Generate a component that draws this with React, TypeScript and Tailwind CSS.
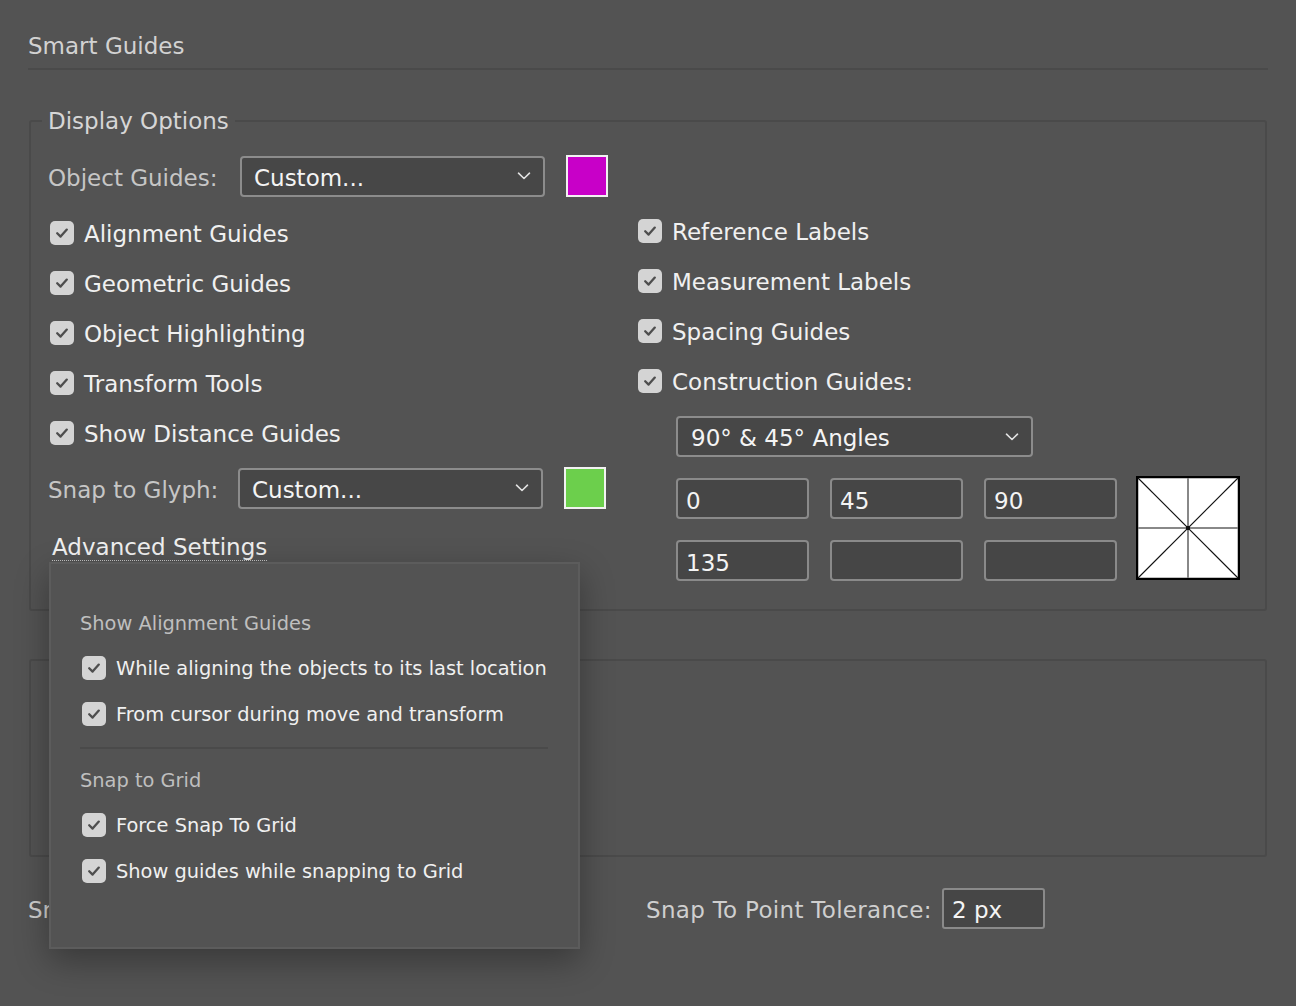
import React from "react";

const Check = () => (
  <span className="w-[24px] h-[24px] rounded-[5px] bg-[#d4d4d4] flex items-center justify-center shrink-0">
    <svg width="14" height="12" viewBox="0 0 14 12">
      <path d="M2.2 6.2 L5.6 9.6 L11.8 2.6" stroke="#4e4e4e" strokeWidth="2.3" fill="none" strokeLinecap="round" strokeLinejoin="round" />
    </svg>
  </span>
);

const Chevron = () => (
  <svg width="14" height="8" viewBox="0 0 14 8" className="shrink-0">
    <path d="M1.5 1.2 L7 6.5 L12.5 1.2" stroke="#e2e2e2" strokeWidth="1.6" fill="none" strokeLinecap="round" strokeLinejoin="round" />
  </svg>
);

const CheckRow = ({ label }: { label: string }) => (
  <div className="h-[50px] flex items-center">
    <span className="ml-[2px]">
      <Check />
    </span>
    <span className="ml-[10px] pt-[1px] text-[23px] leading-[28px] text-[#f0f0f0]">{label}</span>
  </div>
);

const CheckRowR = ({ label }: { label: string }) => (
  <div className="h-[50px] flex items-center">
    <Check />
    <span className="ml-[10px] pt-[1px] text-[23px] leading-[28px] text-[#f0f0f0]">{label}</span>
  </div>
);

const PopRow = ({ label }: { label: string }) => (
  <div className="h-[46px] flex items-center">
    <span className="ml-[2px]">
      <Check />
    </span>
    <span className="ml-[10px] pt-[1px] text-[19.4px] leading-[26px] text-[#f0f0f0]">{label}</span>
  </div>
);

const Field = ({ value }: { value: string }) => (
  <div className="w-[133px] h-[41px] rounded-[4px] border-2 border-[#8a8a8a] bg-[#464646] flex items-center pl-[8px] pt-[4px] text-[23px] leading-[28px] text-[#f4f4f4]">
    {value}
  </div>
);

export default function App() {
  return (
    <div className="relative w-[1296px] h-[1006px] overflow-hidden bg-[#535353] font-['DejaVu_Sans',sans-serif]">
      <div className="px-[28px]">
        <div className="h-[70px] border-b-2 border-[#4a4a4a] pt-[32px]">
          <div className="text-[23px] leading-[28px] text-[#d2d2d2]">Smart Guides</div>
        </div>

        <fieldset className="mt-[36px] mx-[1px] border-2 border-[#4a4a4a] rounded-[3px] pb-[28px]">
          <legend className="ml-[11px] px-[6px] pt-[1px] text-[23px] leading-[28px] text-[#d6d6d6]">Display Options</legend>
          <div className="flex">
            <div className="w-[607px] pl-[17px] flex flex-col">
              <div className="mt-[20px] h-[42px] flex items-center">
                <span className="w-[192px] pt-[3px] text-[23px] leading-[28px] text-[#c6c6c6]">Object Guides:</span>
                <div className="w-[305px] h-[41px] rounded-[4px] border-2 border-[#8c8c8c] bg-[#474747] flex items-center justify-between pl-[12px] pr-[12px]">
                  <span className="pt-[3px] text-[23px] leading-[28px] text-[#f4f4f4]">Custom...</span>
                  <Chevron />
                </div>
                <div className="ml-[21px] w-[42px] h-[42px] border-2 border-[#f2f2f2] bg-[#c800c8]" />
              </div>
              <div className="mt-[11px] flex flex-col">
                <CheckRow label="Alignment Guides" />
                <CheckRow label="Geometric Guides" />
                <CheckRow label="Object Highlighting" />
                <CheckRow label="Transform Tools" />
                <CheckRow label="Show Distance Guides" />
              </div>
              <div className="mt-[9px] h-[42px] flex items-center">
                <span className="w-[190px] pt-[3px] text-[23px] leading-[28px] text-[#c6c6c6]">Snap to Glyph:</span>
                <div className="w-[305px] h-[41px] rounded-[4px] border-2 border-[#8c8c8c] bg-[#474747] flex items-center justify-between pl-[12px] pr-[12px]">
                  <span className="pt-[3px] text-[23px] leading-[28px] text-[#f4f4f4]">Custom...</span>
                  <Chevron />
                </div>
                <div className="ml-[21px] w-[42px] h-[42px] border-2 border-[#f2f2f2] bg-[#6ccf4c]" />
              </div>
              <div className="mt-[23px] ml-[4px] self-start pt-[2px] text-[23px] leading-[26px] text-[#f0f0f0] border-b-[1.5px] border-dotted border-[#c4c4c4]">
                Advanced Settings
              </div>
            </div>

            <div className="flex flex-col">
              <div className="mt-[71px] flex flex-col">
                <CheckRowR label="Reference Labels" />
                <CheckRowR label="Measurement Labels" />
                <CheckRowR label="Spacing Guides" />
                <CheckRowR label="Construction Guides:" />
              </div>
              <div className="mt-[10px] ml-[38px] w-[357px] h-[41px] rounded-[4px] border-2 border-[#8c8c8c] bg-[#474747] flex items-center justify-between pl-[13px] pr-[12px]">
                <span className="pt-[3px] text-[23px] leading-[28px] text-[#f4f4f4]">90° &amp; 45° Angles</span>
                <Chevron />
              </div>
              <div className="mt-[19px] ml-[38px] flex items-start">
                <div className="mt-[2px] grid grid-cols-[133px_133px_133px] gap-x-[21px] gap-y-[21px]">
                  <Field value="0" />
                  <Field value="45" />
                  <Field value="90" />
                  <Field value="135" />
                  <Field value="" />
                  <Field value="" />
                </div>
                <svg width="104" height="104" viewBox="0 0 104 104" className="ml-[19px] shrink-0">
                  <rect x="1" y="1" width="102" height="102" fill="#ffffff" stroke="#000000" strokeWidth="2.5" />
                  <line x1="52" y1="2" x2="52" y2="102" stroke="#888888" strokeWidth="2" />
                  <line x1="2" y1="52" x2="102" y2="52" stroke="#888888" strokeWidth="2" />
                  <line x1="2" y1="2" x2="102" y2="102" stroke="#111111" strokeWidth="1.1" />
                  <line x1="102" y1="2" x2="2" y2="102" stroke="#111111" strokeWidth="1.1" />
                  <rect x="50" y="50" width="4" height="4" fill="#111111" />
                </svg>
              </div>
            </div>
          </div>
        </fieldset>

        <div className="mt-[48px] mx-[1px] h-[198px] border-2 border-[#4a4a4a] rounded-[3px]" />

        <div className="mt-[31px] h-[41px] flex items-center">
          <div className="w-[618px] pt-[3px] text-[23px] leading-[28px] text-[#cfcfcf]">Snapping Tolerance:</div>
          <span className="w-[296px] pt-[3px] text-[23px] leading-[28px] tracking-[0.3px] text-[#cfcfcf]">Snap To Point Tolerance:</span>
          <div className="w-[103px] h-[41px] rounded-[3px] border-2 border-[#8a8a8a] bg-[#464646] flex items-center pl-[8px] pt-[3px] text-[23px] leading-[28px] text-[#f4f4f4]">
            2 px
          </div>
        </div>
      </div>

      <div className="absolute left-[49px] top-[562px] w-[531px] h-[387px] bg-[#535353] border-2 border-[#5c5c5c] shadow-[0_12px_32px_rgba(0,0,0,0.32)] pl-[29px] pr-[30px] pt-[47px]">
        <div className="text-[19.4px] leading-[26px] text-[#bfbfbf]">Show Alignment Guides</div>
        <div className="mt-[8px]">
          <PopRow label="While aligning the objects to its last location" />
          <PopRow label="From cursor during move and transform" />
        </div>
        <div className="mt-[10px] h-[2px] bg-[#4a4a4a]" />
        <div className="mt-[19px] text-[19.4px] leading-[26px] text-[#bfbfbf]">Snap to Grid</div>
        <div className="mt-[8px]">
          <PopRow label="Force Snap To Grid" />
          <PopRow label="Show guides while snapping to Grid" />
        </div>
      </div>
    </div>
  );
}
